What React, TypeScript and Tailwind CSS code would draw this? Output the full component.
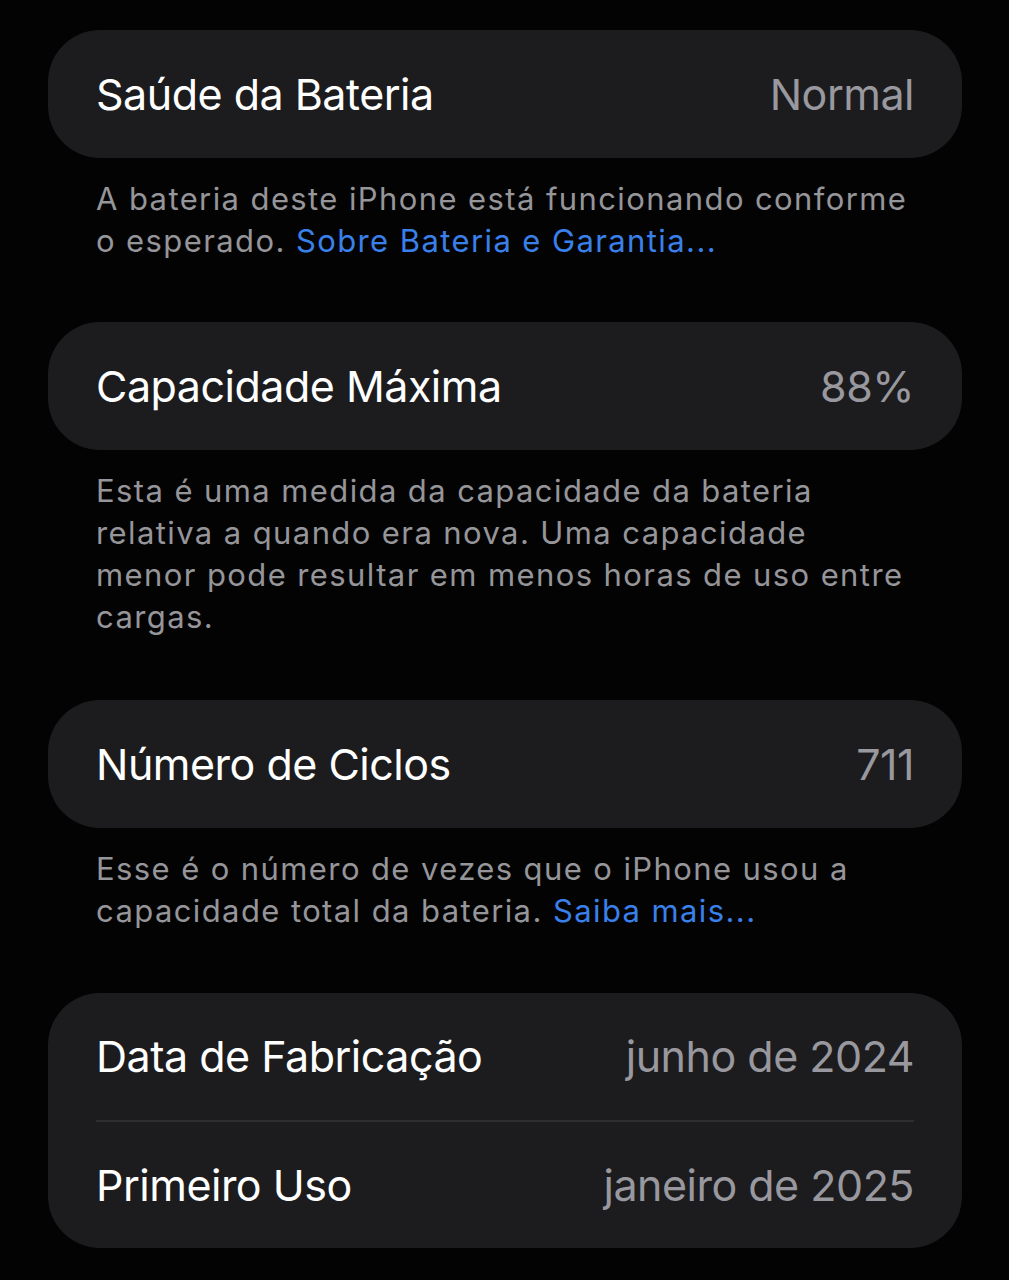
import React from "react";

const font = { fontFamily: "Inter, 'Noto Sans', sans-serif" };

function Row({ label, value }: { label: string; value: string }) {
  return (
    <div className="flex h-[128px] items-center justify-between">
      <span className="text-[43px] leading-none tracking-[-0.5px] text-white">{label}</span>
      <span className="text-[43px] leading-none tracking-[-0.5px] text-[#98989e]">{value}</span>
    </div>
  );
}

function Card({ children }: { children: React.ReactNode }) {
  return <div className="rounded-[52px] bg-[#1c1c1e] px-[48px]">{children}</div>;
}

function Footer({ children }: { children: React.ReactNode }) {
  return (
    <p className="mt-[20px] pl-[48px] pr-[20px] text-[31px] leading-[42px] tracking-[1.4px] text-[#95959a]">
      {children}
    </p>
  );
}

export default function App() {
  return (
    <div className="min-h-[1280px] w-[1009px] bg-[#030303] pl-[48px] pr-[47px] pt-[30px]" style={font}>
      <Card>
        <Row label="Saúde da Bateria" value="Normal" />
      </Card>
      <Footer>
        A bateria deste iPhone está funcionando conforme
        <br />
        o esperado. <span className="text-[#3a80ea]">Sobre Bateria e Garantia...</span>
      </Footer>
      <div className="h-[60px]" />
      <Card>
        <Row label="Capacidade Máxima" value="88%" />
      </Card>
      <Footer>
        Esta é uma medida da capacidade da bateria
        <br />
        relativa a quando era nova. Uma capacidade
        <br />
        menor pode resultar em menos horas de uso entre
        <br />
        cargas.
      </Footer>
      <div className="h-[62px]" />
      <Card>
        <Row label="Número de Ciclos" value="711" />
      </Card>
      <Footer>
        Esse é o número de vezes que o iPhone usou a
        <br />
        capacidade total da bateria. <span className="text-[#3a80ea]">Saiba mais...</span>
      </Footer>
      <div className="h-[61px]" />
      <Card>
        <div className="flex h-[127px] items-center justify-between">
          <span className="text-[43px] leading-none tracking-[-0.5px] text-white">Data de Fabricação</span>
          <span className="text-[43px] leading-none tracking-[-0.5px] text-[#98989e]">junho de 2024</span>
        </div>
        <div className="h-[2px] bg-[#2e2e31]" />
        <div className="flex h-[126px] items-center justify-between">
          <span className="text-[43px] leading-none tracking-[-0.5px] text-white">Primeiro Uso</span>
          <span className="text-[43px] leading-none tracking-[-0.5px] text-[#98989e]">janeiro de 2025</span>
        </div>
      </Card>
    </div>
  );
}
